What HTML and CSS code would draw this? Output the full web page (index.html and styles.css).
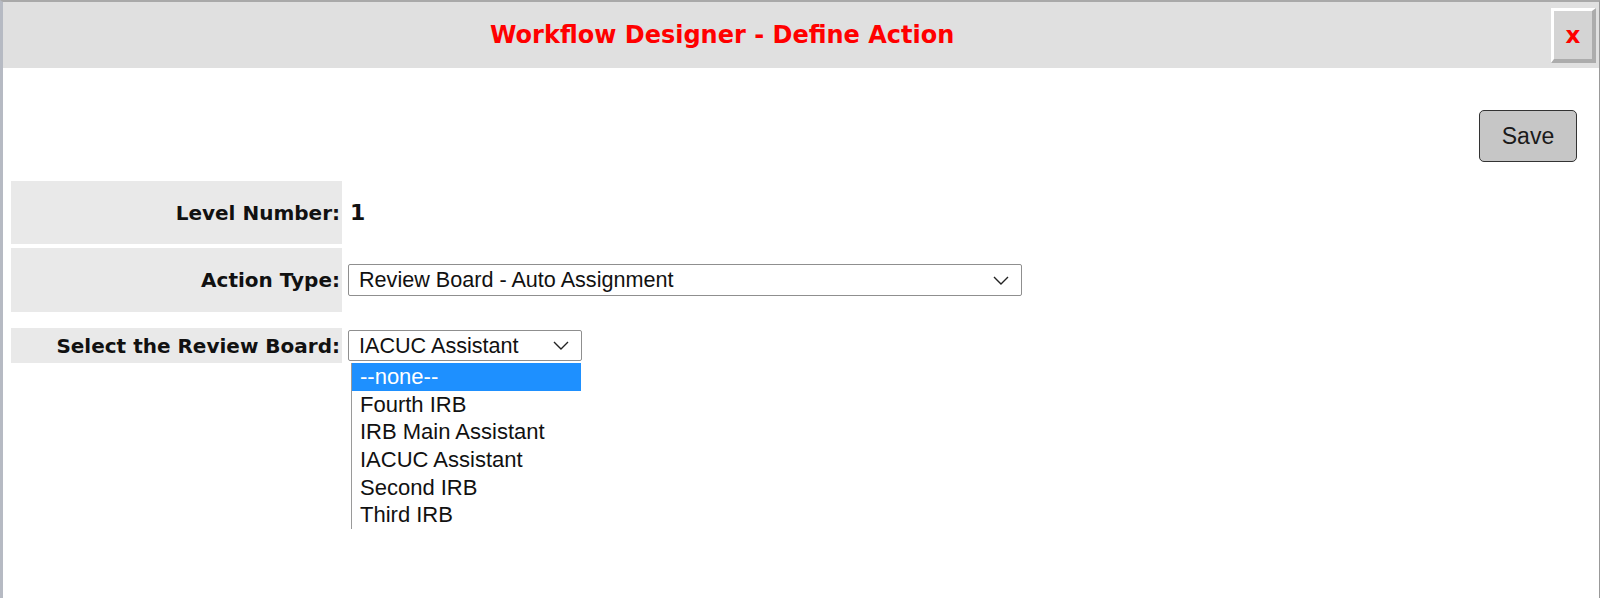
FILE: index.html
```html
<!DOCTYPE html>
<html lang="en">
<head>
  <meta charset="UTF-8">
  <title>Workflow Designer - Define Action</title>
  <link rel="stylesheet" href="styles.css">
</head>
<body>

<div class="dialog">
  <div class="dialog-header">
    <h2 class="dialog-title">Workflow Designer - Define Action</h2>
    <button class="close-button">x</button>
  </div>

  <div class="dialog-body">
    <div class="toolbar">
      <button class="save-button">Save</button>
    </div>

    <!-- Level -->
    <div class="form-row row-level">
      <div class="form-label">Level Number:</div>
      <div class="form-value">1</div>
    </div>

    <!-- Action type -->
    <div class="form-row row-action">
      <div class="form-label">Action Type:</div>
      <div class="select select-wide">
        <span>Review Board - Auto Assignment</span>
        <svg class="chevron" width="16" height="9" viewBox="0 0 16 9"><path d="M1 1 L8 8 L15 1" fill="none" stroke="#222" stroke-width="1.4"/></svg>
      </div>
    </div>

    <!-- Review board -->
    <div class="form-row row-board">
      <div class="form-label">Select the Review Board:</div>
      <div class="select-wrap">
        <div class="select select-small">
          <span>IACUC Assistant</span>
          <svg class="chevron" width="16" height="9" viewBox="0 0 16 9"><path d="M1 1 L8 8 L15 1" fill="none" stroke="#222" stroke-width="1.4"/></svg>
        </div>
        <ul class="option-list">
          <li class="selected">--none--</li>
          <li>Fourth IRB</li>
          <li>IRB Main Assistant</li>
          <li>IACUC Assistant</li>
          <li>Second IRB</li>
          <li>Third IRB</li>
        </ul>
      </div>
    </div>
  </div>
</div>

</body>
</html>
```

FILE: styles.css
```css
body {
  margin: 0;
  background-color: #ffffff;
  font-family: "Liberation Sans", Arial, sans-serif;
}
.dialog {
  height: 598px;
  box-sizing: border-box;
  border-top: 2px solid #a9a9a9;
  border-left: 3px solid #b6bac3;
  border-right: 1px solid #999999;
}
.dialog-header {
  display: flex;
  align-items: center;
  height: 66px;
  background-color: #e0e0e0;
}
.dialog-title {
  flex: 1;
  margin: 0;
  padding-left: 487px;
  font-family: "DejaVu Sans", Verdana, sans-serif;
  font-size: 24px;
  font-weight: bold;
  color: #ff0000;
}
.close-button {
  width: 45px;
  height: 55px;
  margin-right: 3px;
  padding: 0;
  border-style: solid;
  border-width: 3px 4px 4px 3px;
  border-color: #ffffff #acacac #acacac #ffffff;
  background-color: #d4d4d4;
  font-family: "DejaVu Sans", Verdana, sans-serif;
  font-size: 23px;
  font-weight: bold;
  color: #ff0000;
}
.dialog-body {
  padding: 42px 22px 0 8px;
}
.toolbar {
  display: flex;
  justify-content: flex-end;
}
.save-button {
  width: 98px;
  height: 52px;
  border: 1px solid #333333;
  border-radius: 5px;
  background-color: #c6c6c6;
  font-family: "Liberation Sans", Arial, sans-serif;
  font-size: 23px;
  color: #1a1a1a;
}
.form-row {
  display: flex;
  align-items: center;
  gap: 6px;
}
.row-level {
  height: 63px;
  margin-top: 19px;
}
.row-action {
  height: 64px;
  margin-top: 4px;
}
.row-board {
  height: 35px;
  margin-top: 16px;
}
.form-label {
  align-self: stretch;
  display: flex;
  align-items: center;
  justify-content: flex-end;
  width: 331px;
  box-sizing: border-box;
  padding-right: 2px;
  background-color: #e9e9e9;
  font-family: "DejaVu Sans", Verdana, sans-serif;
  font-size: 20px;
  font-weight: bold;
  color: #111111;
}
.form-value {
  padding-left: 2px;
  font-family: "DejaVu Sans", Verdana, sans-serif;
  font-size: 22px;
  font-weight: bold;
  color: #111111;
}
.select {
  display: flex;
  align-items: center;
  justify-content: space-between;
  box-sizing: border-box;
  padding: 0 12px 0 10px;
  border: 1px solid #8f8f8f;
  border-radius: 2px;
  background-color: #ffffff;
  font-size: 21.6px;
  color: #111111;
}
.select-wide {
  width: 674px;
  height: 32px;
}
.select-small {
  width: 234px;
  height: 31px;
}
.select-wrap {
  position: relative;
}
.option-list {
  position: absolute;
  top: calc(100% + 2px);
  left: 3px;
  width: 229px;
  margin: 0;
  padding: 0;
  list-style: none;
  border-left: 1px solid #9a9a9a;
  background-color: #ffffff;
  font-size: 22px;
  color: #111111;
}
.option-list li {
  height: 27.7px;
  line-height: 27.7px;
  padding-left: 8px;
}
.option-list .selected {
  background-color: #1e90ff;
  color: #ffffff;
}
```
